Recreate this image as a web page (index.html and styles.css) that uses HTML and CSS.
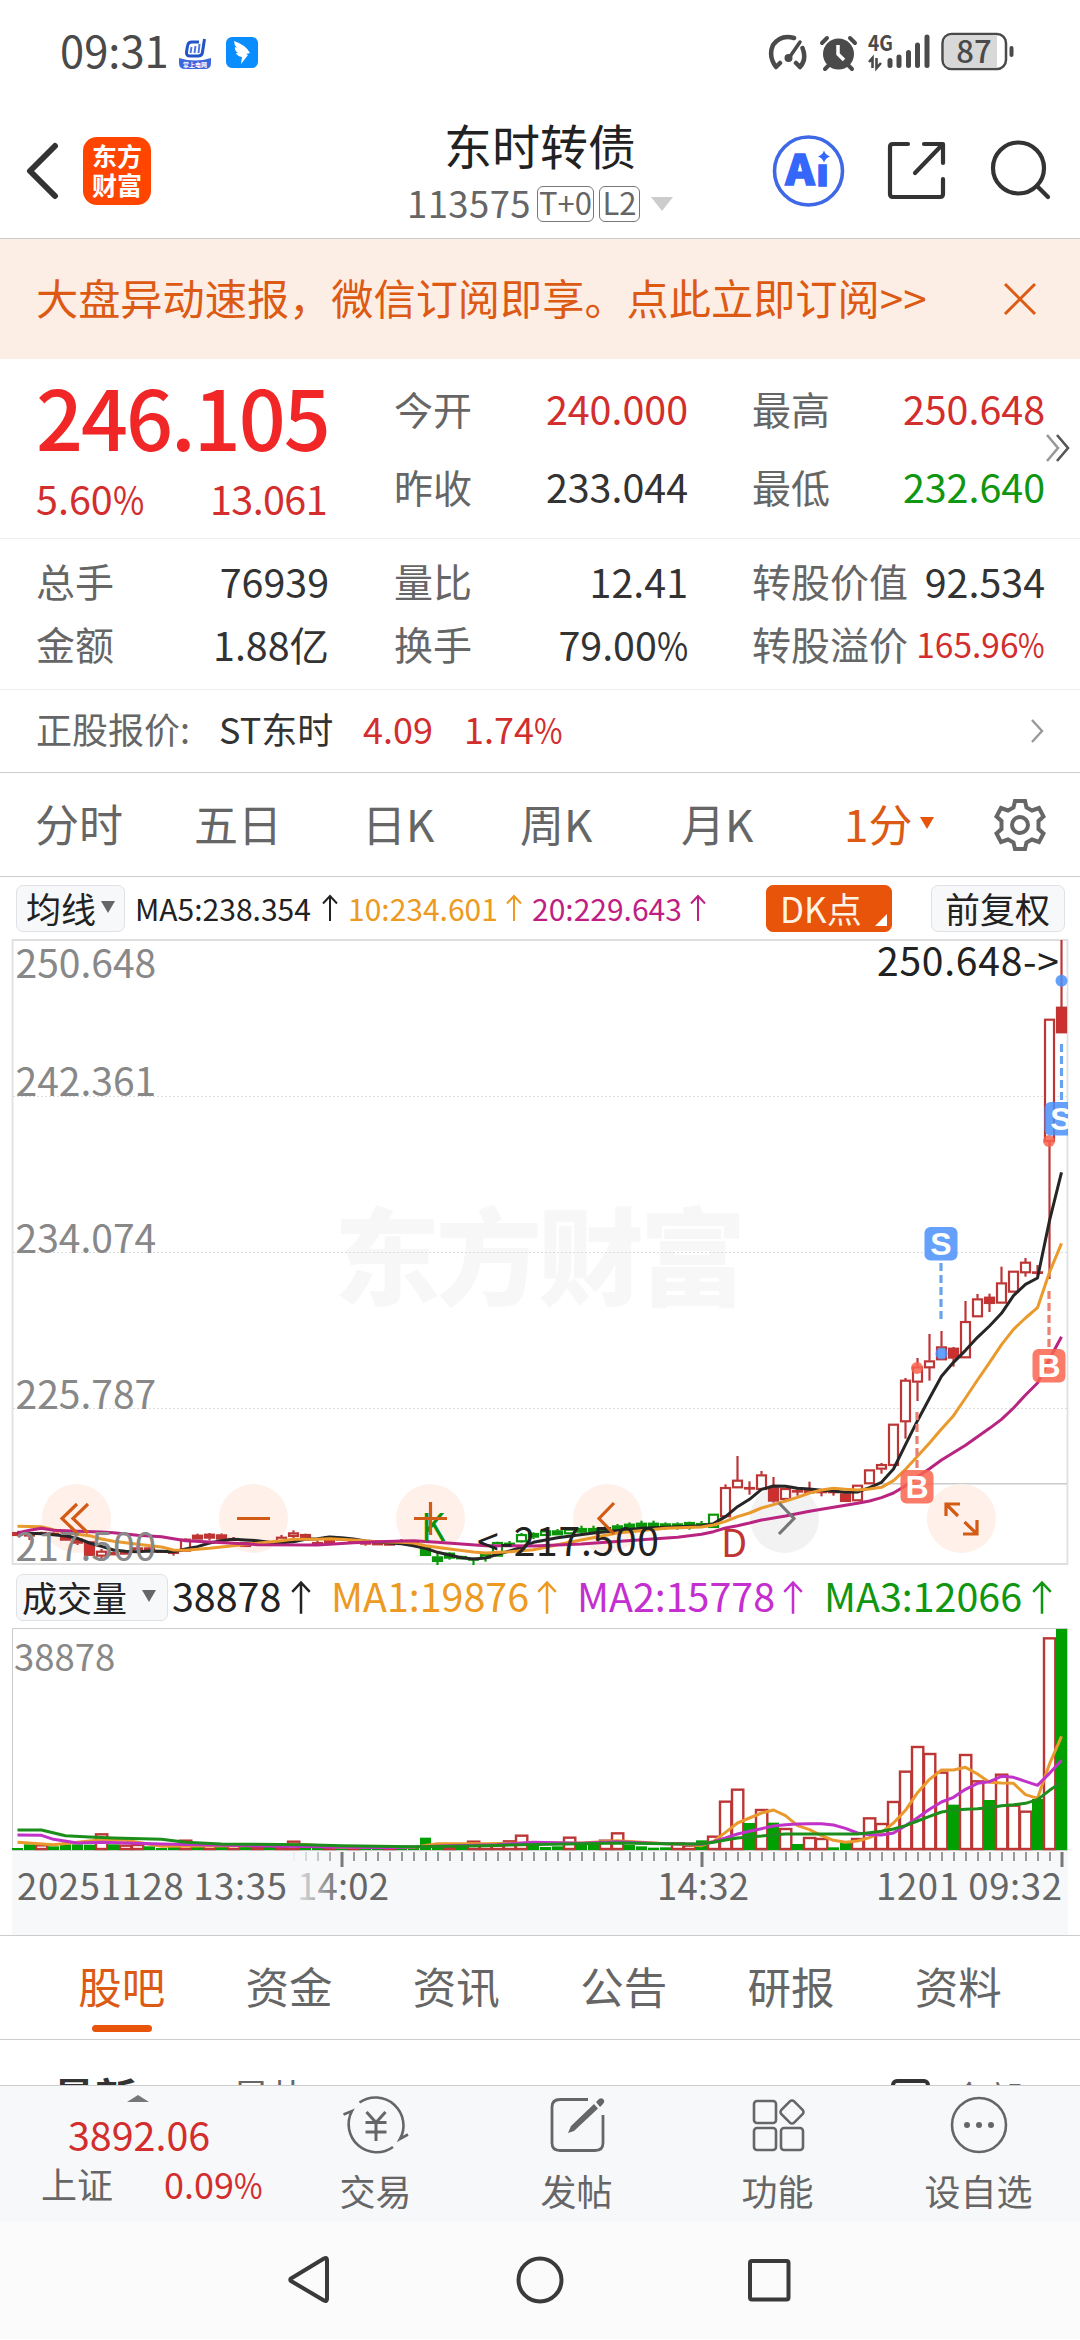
FILE: index.html
```html
<!DOCTYPE html>
<html lang="zh-CN">
<head>
<meta charset="utf-8">
<title>东时转债 113575</title>
<link rel="stylesheet" href="styles.css">
</head>
<body>
<div class="screen">
  <div class="status">
    <span class="clock">09:31</span>
    <svg class="note-a" width="32" height="31" viewBox="0 0 32 31"><path d="M0 20Q16 25 32 20V25Q32 31 26 31H6Q0 31 0 25Z" fill="#3b68dc"/><path d="M20 4H13Q9 4 8.500 8L7.500 14Q7 18 11 18H19Q23 18 23.500 14L25.500 1" fill="none" stroke="#2353c8" stroke-width="3"/><path d="M12.500 9L11.500 15M16.500 8L15.500 15M20.500 6L19.500 15" stroke="#4d78dd" stroke-width="2"/><text x="16" y="29" font-size="6" font-weight="700" text-anchor="middle" fill="#fff">掌上电网</text></svg>
    <svg class="note-b" width="32" height="31" viewBox="0 0 32 31"><rect width="32" height="31" rx="6" fill="#0a8dff"/><path d="M8 4Q20 8 24 16L20 17L22 18L15 27L16 20Q11 19 10 16L12 16Q8 13 9 10L11 11Q8 8 8 4Z" fill="#fff"/></svg>
    <svg class="sys" width="250" height="40" viewBox="0 0 250 40">
      <g fill="none" stroke="#4a4a4a" stroke-width="4.500" stroke-linecap="round">
        <path d="M9 35Q1 24 6 13Q14 2 27 6M35.500 16Q40 27 33 35M9 35L13 31M33 35L29 31"/>
        <path d="M22 26L33 10" stroke-width="3.500"/>
      </g>
      <circle cx="21.500" cy="26" r="4" fill="#4a4a4a"/>
      <circle cx="71.500" cy="22" r="15.500" fill="#4a4a4a"/>
      <path d="M71 13V22L77 28" fill="none" stroke="#fff" stroke-width="3.500"/>
      <path d="M55 11L60 6M88 11L83 6M58 37L62 33M85 37L81 33" stroke="#4a4a4a" stroke-width="4" stroke-linecap="round"/>
      <text x="101" y="19" font-size="21.500" font-weight="700" fill="#4a4a4a" textLength="25" lengthAdjust="spacingAndGlyphs">4G</text>
      <path d="M102 30L105.500 26V36M109.500 26V36L114 31" fill="none" stroke="#4a4a4a" stroke-width="2.600"/>
      <path d="M123 28.500V33.500M132 25V33.500M141.500 20.500V33.500M150.500 13V33.500M160 5V33.500" stroke="#4a4a4a" stroke-width="5" stroke-linecap="round"/>
      <rect x="175.500" y="2" width="63.500" height="35" rx="9" fill="#fff" stroke="#4a4a4a" stroke-width="2.500"/>
      <path d="M184 3.500H230V35.500H184Q177 35.500 177 28V11Q177 3.500 184 3.500Z" fill="#d8d8d8"/>
      <rect x="242.500" y="14" width="4" height="11" rx="2" fill="#4a4a4a"/>
      <text x="207" y="31" font-size="31" fill="#4a4a4a" text-anchor="middle" font-weight="500">87</text>
    </svg>
  </div>

  <header class="header">
    <svg class="back" width="34" height="58" viewBox="0 0 34 58"><path d="M30 4L5 29L30 54" fill="none" stroke="#333" stroke-width="6" stroke-linecap="round" stroke-linejoin="round"/></svg>
    <div class="brand">东方<br>财富</div>
    <div class="heading">
      <h1>东时转债</h1>
      <div class="code"><span class="num">113575</span><span class="tag tag-t">T+0</span><span class="tag tag-l">L2</span><i class="caret"></i></div>
    </div>
    <svg class="tools" width="290" height="76" viewBox="0 0 290 76">
      <circle cx="38.500" cy="38" r="34" fill="#fff" stroke="#3f68e6" stroke-width="3.600"/>
      <text x="15.500" y="52" font-size="42" class="ai" textLength="29" lengthAdjust="spacingAndGlyphs">A</text>
      <text x="46.500" y="53" font-size="37" class="ai" textLength="12" lengthAdjust="spacingAndGlyphs">ı</text>
      <path d="M54 17.500Q55.500 22 60 23.500Q55.500 25 54 29.500Q52.500 25 48 23.500Q52.500 22 54 17.500Z" fill="#3567fb"/>
      <g fill="none" stroke="#333" stroke-width="4.200" stroke-linecap="round" stroke-linejoin="round">
        <path d="M138 11H123Q120 11 120 14V61Q120 64 123 64H170Q173 64 173 61V46M154 11H173V30M172 12L145 40"/>
        <circle cx="248.500" cy="35" r="25.500"/><path d="M267 53L278 64"/>
      </g>
    </svg>
  </header>

  <div class="banner"><span>大盘异动速报，微信订阅即享。点此立即订阅&gt;&gt;</span>
    <svg width="34" height="34" viewBox="0 0 34 34"><path d="M2 2L32 32M32 2L2 32" stroke="#dc5a14" stroke-width="3"/></svg>
  </div>

  <section class="quote">
    <div class="last"><b>246.105</b><div class="chg"><span>5.60<i class="pct">%</i></span><span>13.061</span></div></div>
    <div class="pairs">
      <span>今开</span><em class="red">240.000</em><span class="c3">最高</span><em class="red">250.648</em>
      <span>昨收</span><em>233.044</em><span class="c3">最低</span><em class="green">232.640</em>
    </div>
    <svg class="more" width="26" height="30" viewBox="0 0 26 30"><g fill="none" stroke-width="2.600"><path d="M2 2L13 15L2 28" stroke="#999"/><path d="M12 2L23 15L12 28" stroke="#555"/></g></svg>
  </section>

  <section class="stats">
    <span>总手</span><em>76939</em><span class="c2">量比</span><em>12.41</em><span class="c3">转股价值</span><em>92.534</em>
    <span>金额</span><em>1.88亿</em><span class="c2">换手</span><em>79.00<i class="pct">%</i></em><span class="c3">转股溢价</span><em class="red small">165.96<i class="pct">%</i></em>
  </section>

  <section class="under">
    <span class="lbl">正股报价:</span><span class="name">ST东时</span><span class="red v1">4.09</span><span class="red">1.74<i class="pct">%</i></span>
    <svg width="14" height="26" viewBox="0 0 14 26"><path d="M2 2L12 13L2 24" fill="none" stroke="#999" stroke-width="2.400"/></svg>
  </section>

  <nav class="periods">
    <span>分时</span><span>五日</span><span>日K</span><span>周K</span><span>月K</span><span class="on">1分<i class="caret"></i></span>
    <svg width="54" height="54" viewBox="-27 -27 54 54"><g fill="none" stroke="#666" stroke-width="4" stroke-linejoin="miter"><path d="M-5 -24H5L6.500 -17.500L12 -14.500L19 -17L23.500 -8.500L18.500 -4V4L23.500 8.500L19 17L12 14.500L6.500 17.500L5 24H-5L-6.500 17.500L-12 14.500L-19 17L-23.500 8.500L-18.500 4V-4L-23.500 -8.500L-19 -17L-12 -14.500L-6.500 -17.500Z"/><circle r="8"/></g></svg>
  </nav>

  <div class="legend legend-price">
    <span class="chip">均线<i class="caret"></i></span>
    <span class="ma">MA5:238.354</span><svg class="arr"><use href="#up"/></svg>
    <span class="ma orange">10:234.601</span><svg class="arr orange"><use href="#up"/></svg>
    <span class="ma magenta">20:229.643</span><svg class="arr magenta"><use href="#up"/></svg>
    <span class="chip dk">DK点</span>
    <span class="chip fq">前复权</span>
  </div>

  <svg class="price" id="price" width="1080" height="627" viewBox="0 940 1080 627">
    <defs>
      <symbol id="up" viewBox="0 0 16 28"><path d="M8 27V2M1 9.500L8 2L15 9.500" fill="none" stroke="currentColor" stroke-width="2"/></symbol>
      <clipPath id="plot"><rect x="12" y="940" width="1056" height="626"/></clipPath>
    </defs>
    <text class="mark" x="334" y="1298" textLength="412">东方财富</text>
    <path class="grid" d="M13 1097.500H1067M13 1253.500H1067M13 1409.500H1067"/>
    <path class="frame" d="M12.500 941H1067.500V1565H12.500Z"/>
    <path d="M881 1484.700H1067" stroke="#ccc" stroke-width="1.500"/>
    <g fill="#fff0e9"><circle cx="76.500" cy="1519.500" r="34.500"/><circle cx="253.500" cy="1519.500" r="34.500"/><circle cx="430.500" cy="1519.500" r="34.500"/><circle cx="607.500" cy="1519.500" r="34.500"/><circle cx="784.500" cy="1519.500" r="34.500" fill="#f2f2f2"/><circle cx="961.500" cy="1519.500" r="34.500"/></g>
    <g id="candles" clip-path="url(#plot)"></g>
    <g id="averages"></g>
    <g class="ylab"><text x="15.500" y="979">250.648</text><text x="15.500" y="1097">242.361</text><text x="15.500" y="1254">234.074</text><text x="15.500" y="1409.500">225.787</text><text x="15.500" y="1562">217.500</text></g>
    <text class="peak" x="877" y="977" textLength="182">250.648-&gt;</text>
    <text class="peak" x="477" y="1557" textLength="182">&lt;-217.500</text>
    <text class="kd" x="421" y="1541.500" fill="#0a930a">K</text>
    <text class="kd" x="721" y="1557.500" fill="#c03434">D</text>
    <g fill="none" stroke="#d25c16" stroke-width="3.200">
      <path d="M77 1505L62 1519.500L77 1534M88 1505L73 1519.500L88 1534M237 1519.500H270M414 1519.500H447M430.500 1503V1536M614 1504L599 1519.500L614 1535"/>
      <path d="M946 1517V1505H960M947 1506L958 1517M964.500 1523L977 1535M963 1535H977V1521" />
      <path d="M779 1504L794 1519.500L779 1535" stroke="#777"/>
    </g>
    <g class="tips" clip-path="url(#plot)">
      <path d="M941 1264V1320M1061.500 1045V1101" class="sl"/><path d="M917 1413V1469M1049 1292V1348" class="bl"/>
      <circle cx="1061.500" cy="981.700" r="6" class="s"/><circle cx="941.500" cy="1354.500" r="6" class="s"/>
      <circle cx="917" cy="1369" r="6" class="b"/><circle cx="1049" cy="1142" r="6" class="b"/>
      <rect x="924.500" y="1228" width="33" height="33.500" rx="6" class="s"/><text x="941" y="1256">S</text>
      <rect x="1044.500" y="1103" width="33" height="33.500" rx="6" class="s"/><text x="1061" y="1131">S</text>
      <rect x="900.500" y="1471" width="33" height="33.500" rx="6" class="b"/><text x="917" y="1499">B</text>
      <rect x="1032.500" y="1350" width="33" height="33.500" rx="6" class="b"/><text x="1049" y="1378">B</text>
    </g>
  </svg>

  <div class="legend legend-vol">
    <span class="chip">成交量<i class="caret"></i></span>
    <span class="ma">38878</span><svg class="arr"><use href="#up"/></svg>
    <span class="ma orange">MA1:19876</span><svg class="arr orange"><use href="#up"/></svg>
    <span class="ma violet">MA2:15778</span><svg class="arr violet"><use href="#up"/></svg>
    <span class="ma green">MA3:12066</span><svg class="arr green"><use href="#up"/></svg>
  </div>

  <svg class="volume" id="volume" width="1080" height="307" viewBox="0 1629 1080 307">
    <defs><linearGradient id="fade"><stop offset="0" stop-color="#f7f8fa"/><stop offset="1" stop-color="#f7f8fa" stop-opacity="0"/></linearGradient></defs>
    <rect x="12" y="1852" width="1056" height="84" fill="#f7f8fa"/>
    <path d="M12.500 1629.500H1067.500V1851.500H12.500Z" fill="none" stroke="#ccc"/>
    <text x="14" y="1672" class="vmax">38878</text>
    <g id="bars"></g>
    <g id="vaverages"></g>
    <g id="ticks"></g>
    <g class="xlab"><text x="17" y="1901" textLength="270">20251128 13:35</text><text x="297" y="1901" textLength="92">14:02</text><text x="657" y="1901" textLength="92">14:32</text><text x="876" y="1901" textLength="186">1201 09:32</text></g>
    <rect x="289" y="1853" width="54" height="82" fill="url(#fade)"/>
  </svg>

  <nav class="sections">
    <span class="on">股吧</span><span>资金</span><span>资讯</span><span>公告</span><span>研报</span><span>资料</span>
  </nav>

  <div class="feed"><b>最新</b><span class="hot">最热</span><i class="box"></i><span class="all">全部</span></div>

  <footer class="bar">
    <div class="index"><i class="tri"></i><div class="pt">3892.06</div><div class="row"><span>上证</span><span class="red">0.09<i class="pct">%</i></span></div></div>
    <div class="item"><svg width="68" height="60" viewBox="-34 -30 68 60"><g fill="none" stroke="#666" stroke-width="2.600"><path d="M-16.500 -22.500A28 28 0 0 1 24 14L32 9.500M17 22A28 28 0 0 1 -24 -14L-32.500 -10.500"/><path d="M-9.500 -13L0 -2.500L9.500 -13M0 -2.500V16M-10.500 -2.500H10.500M-10.500 7H10.500" stroke-width="3"/></g></svg><span>交易</span></div>
    <div class="item"><svg width="60" height="60" viewBox="-30 -30 60 60"><path d="M11 -25.500H-17Q-25 -25.500 -25 -18V18Q-25 25.500 -17 25.500H18Q26 25.500 26 18V-10" fill="none" stroke="#666" stroke-width="2.800"/><path d="M-9 8L-6 1L17 -21L21 -16.500L-3 6ZM19 -23L22 -26Q25 -28 27 -25Q28 -23 26 -21L23 -18Z" fill="#666"/></svg><span>发帖</span></div>
    <div class="item"><svg width="60" height="60" viewBox="-30 -30 60 60"><g fill="none" stroke="#666" stroke-width="2.600"><rect x="-24" y="-24" width="22" height="22" rx="3"/><rect x="-24" y="3" width="22" height="22" rx="3"/><rect x="3" y="3" width="22" height="22" rx="3"/><rect x="5" y="-22" width="18" height="18" rx="3" transform="rotate(45 14 -13)"/></g></svg><span>功能</span></div>
    <div class="item"><svg width="60" height="60" viewBox="-30 -30 60 60"><circle r="27" fill="none" stroke="#666" stroke-width="2.600"/><g fill="#666"><circle cx="-12" r="3"/><circle r="3"/><circle cx="12" r="3"/></g></svg><span>设自选</span></div>
  </footer>

  <div class="keys">
    <svg width="504" height="50" viewBox="288 2256 504 50"><g fill="none" stroke="#3a3a3a" stroke-width="4" stroke-linejoin="round"><path d="M291 2279.500L324 2259.500Q327 2258 327 2261V2300Q327 2303 324 2301.500L291 2282Q289.500 2280.500 291 2279.500Z"/><circle cx="540" cy="2281" r="21.500"/><rect x="750" y="2262" width="38.500" height="38.500" rx="2"/></g></svg>
  </div>
</div>
<script src="chart.js"></script>
</body>
</html>
```

FILE: styles.css
```css
* { box-sizing: border-box; }
body { margin: 0; background: #fff; }
.screen {
  width: 1080px; height: 2340px; overflow: hidden;
  display: flex; flex-direction: column;
  font-family: "Noto Sans CJK SC", "Noto Sans", sans-serif;
  color: #333; background: #fff;
}
.screen > * { flex: none; }
svg { display: block; flex: none; }
svg text { font-family: "Noto Sans CJK SC", "Noto Sans", sans-serif; }
em, i { font-style: normal; }
.red { color: #d22e2e; }
.green { color: #109610; }
.caret { display: block; border: solid transparent; border-width: 12px 7px 0; border-top-color: #666; }
.pct { display: inline-block; transform: scaleX(.86); transform-origin: left; margin-right: -.13em; }

.status { height: 105px; display: flex; align-items: flex-start; padding-left: 60px; }
.clock { width: 119px; font-size: 43.500px; line-height: 100px; color: #4a4a4a; white-space: nowrap; }
.note-a { margin-top: 38px; }
.note-b { margin: 37px 0 0 15px; }
.sys { margin: 32px 0 0 509px; }

.header { height: 134px; display: flex; align-items: flex-start; border-bottom: 1px solid #ccc; padding-left: 25px; }
.back { margin-top: 37px; }
.brand { width: 68px; height: 68px; margin: 32px 0 0 24px; border-radius: 14px; background: #ff4500; color: #fff; font-size: 25px; line-height: 29px; font-weight: 700; text-align: center; padding-top: 4px; }
.heading { width: 390px; margin-left: 194px; text-align: center; }
.heading h1 { margin: 7px 0 0; font-size: 48px; line-height: 64px; font-weight: 400; color: #222; }
.code { display: flex; justify-content: center; align-items: center; height: 36px; margin: 10px 0 0; color: #666; }
.num { font-size: 36.500px; letter-spacing: .4px; line-height: 32px; margin-right: 6px; padding-bottom: 3px; }
.tag { height: 36px; border: 1.500px solid #777; border-radius: 6px; font-size: 31px; line-height: 30px; text-align: center; }
.tag-t { width: 57px; }
.tag-l { width: 41px; margin-left: 5px; }
.code .caret { border-width: 14px 11px 0; border-top-color: #ccc; margin-left: 11px; }
.tools { margin: 28px 0 0 35px; }
.ai { font-weight: 900; fill: #3567fb; stroke: #3567fb; stroke-width: 1.500px; }

.banner { height: 120px; padding: 0 43px 0 36px; display: flex; align-items: center; justify-content: space-between; background: #fdeee5; color: #dc5a14; font-size: 42.200px; }
.banner span { padding-bottom: 6px; }

.quote { position: relative; height: 180px; display: flex; border-bottom: 1px solid #eee; padding: 0 36px 0 36px; }
.last { width: 291px; color: #d22e2e; }
.last b { display: block; margin-top: 6px; font-size: 82.500px; line-height: 100px; font-weight: 500; letter-spacing: -2px; color: #f12626; }
.chg { display: flex; justify-content: space-between; font-size: 39.500px; line-height: 64px; margin-top: 1px; }
.chg span:last-child { letter-spacing: -.6px; }
.pairs { width: 651px; margin-left: 67px; padding-top: 10px; display: grid; grid-template-columns: 90px 204px 154px 203px; grid-auto-rows: 78px; line-height: 78px; font-size: 39px; color: #666; }
.c3 { padding-left: 64px; white-space: nowrap; }
.quote em, .stats em { text-align: right; }
.pairs em, .stats em { color: #333; font-size: 39.400px; }
.quote .red, .stats .red { color: #d22e2e; }
.quote .green { color: #109610; }
.more { position: absolute; right: 9px; top: 74px; }

.stats { height: 151px; padding: 10px 36px 0; display: grid; grid-template-columns: 90px 203px 155px 204px 220px 137px; grid-auto-rows: 63px; line-height: 63px; font-size: 39px; color: #666; border-bottom: 1px solid #eee; white-space: nowrap; }
.c2 { padding-left: 65px; }
.stats .small { font-size: 33.500px; }

.under { height: 83px; padding: 0 36px; display: flex; align-items: center; font-size: 36px; line-height: 74px; border-bottom: 1px solid #ccc; }
.under > span { padding-bottom: 7px; }
.under .lbl { width: 183px; color: #666; }
.under .name { width: 144px; }
.under .v1 { width: 101px; }
.under svg { margin-left: auto; }

.periods { height: 104px; padding-left: 35px; display: grid; grid-template-columns: 159px 168px 158px 161px 163px 149px 60px; align-items: center; font-size: 44px; line-height: 96px; color: #666; border-bottom: 1px solid #ccc; }
.periods > span { padding-bottom: 3px; }
.periods .on { color: #dc5a14; display: flex; align-items: center; }
.periods .on .caret { border-top-color: #e8540a; margin-left: 8px; }

.legend { display: flex; align-items: center; color: #222; white-space: nowrap; }
.chip { height: 47px; border: 1.500px solid #e1e2e6; border-radius: 7px; background: #f7f8fa; font-size: 35px; line-height: 41px; color: #222; padding: 0 9px 2px; display: flex; align-items: center; }
.legend .green { color: #109610; }
.legend .orange { color: #ec9a22; }
.legend .magenta { color: #bf1f83; }
.legend .violet { color: #c42fd0; }
.legend-price { height: 62px; padding-left: 16px; font-size: 30px; }
.legend-price .chip:first-child { width: 109px; }
.legend-price .caret { margin-left: 5px; }
.legend-price .ma { width: 187px; margin-left: 10px; }
.legend-price .ma.orange, .legend-price .ma.magenta { width: 158px; margin-left: 10px; }
.legend-price .arr { width: 16px; height: 28px; }
.legend-price .dk { position: relative; width: 126px; margin-left: 60px; background: #e8540a; border-color: #e8540a; color: #fff3e6; padding-left: 13px; }
.dk::after { content: ""; position: absolute; right: 4px; bottom: 5px; border: solid transparent; border-width: 0 0 12px 12px; border-bottom-color: #fff; }
.legend-price .fq { width: 134px; margin-left: 39px; padding-left: 13px; }

.grid { stroke: #ddd; stroke-dasharray: 2 2; }
.frame { fill: none; stroke: #e0e0e0; stroke-width: 1.800px; }
.mark { font-size: 106px; font-weight: 900; fill: #f7f7f7; }
.ylab text { font-size: 39px; fill: #888; }
.peak { font-size: 39px; fill: #222; }
.kd { font-size: 38px; }
.up { fill: #fff; stroke: #bd3636; }
.up-solid { fill: #cf2e2e; stroke: #bd3636; }
.dn { fill: #fff; stroke: #0c960c; }
.dn-solid { fill: #0c960c; stroke: #0c960c; }
.line { fill: none; stroke-width: 3px; stroke-linejoin: round; }
.tips { fill-opacity: .85; }
.tips .s { fill: #4a90fa; }
.tips .b { fill: #f8644e; }
.sl, .bl { fill: none; stroke-width: 3.200px; stroke-dasharray: 8 4; }
.sl { stroke: #6aa2ee; }
.bl { stroke: #ea8072; }
.tips text { font: 700 32px "Liberation Sans", sans-serif; fill: #fff; fill-opacity: 1; text-anchor: middle; }

.legend-vol { height: 62px; padding-left: 16px; font-size: 39.400px; }
.legend-vol .chip { width: 152px; padding-left: 5px; }
.legend-vol .caret { margin-left: 15px; }
.legend-vol .ma { width: 206px; margin-left: 20px; padding-bottom: 5px; flex: none; }
.legend-vol .chip + .ma { width: 119px; margin-left: 4px; }
.legend-vol .arr { width: 20px; height: 35px; }
.legend-vol .ma.violet { width: 206px; margin-left: 20px; }
.legend-vol .ma.green { width: 208px; margin-left: 21px; }
.vmax { font-size: 36.500px; fill: #888; }
.xlab text { font-size: 36.500px; fill: #666; }

.sections { height: 105px; margin-top: 0; padding: 0 38px; display: flex; border: solid #ccc; border-width: 1px 0; font-size: 43.500px; line-height: 100px; color: #666; text-align: center; }
.sections span { flex: 1; }
.sections .on { position: relative; color: #dc5a14; }
.sections .on::after { content: ""; position: absolute; left: 54px; bottom: 7px; width: 60px; height: 7px; border-radius: 4px; background: #e8540a; }

.feed { height: 45px; overflow: hidden; display: flex; align-items: flex-start; padding: 34px 0 0 53px; font-size: 38px; line-height: 44px; color: #666; }
.feed b { font-size: 42px; color: #333; width: 179px; }
.hot { width: 659px; }
.box { width: 39px; height: 39px; margin-top: 5px; border: 4px solid #333; border-radius: 6px; }
.all { font-size: 36px; margin: 1px 0 0 21px; }

.bar { height: 136px; border-top: 1px solid #ccc; background: #f7f8fa; display: flex; color: #666; }
.index { width: 275px; }
.tri { display: block; width: 0; margin: 9px 0 0 127px; border: solid transparent; border-width: 0 11px 7px; border-bottom-color: #777; }
.pt { margin: 4px 0 0 68px; font-size: 39.400px; line-height: 56px; color: #d22e2e; }
.index .row { display: flex; font-size: 36px; line-height: 40px; margin: 1px 0 0 41px; }
.index .row .red { margin-left: 51px; }
.item { width: 201px; display: flex; flex-direction: column; align-items: center; padding-top: 9px; font-size: 36px; line-height: 48px; }
.item span { margin-top: 11px; }
.keys { height: 118px; background: #fbfbfb; padding: 34px 0 0 288px; }
```

FILE: chart.js
```js
const NS = 'http://www.w3.org/2000/svg';
const x = i => 17.5 + 12 * i;

function add(parent, tag, attrs) {
  const el = document.createElementNS(NS, tag);
  for (const k in attrs) el.setAttribute(k, attrs[k]);
  document.getElementById(parent).appendChild(el);
}

// kind (r/g hollow, R/G solid), high, body top, body bottom, low
const candles = `R1120 1120 1130 1130|R1124 1126 1130 1143|R1118 1120 1124 1126|R1120 1122 1128 1128|R1125 1125 1144 1144|R1140 1140 1153 1158|R1148 1148 1190 1190|r1170 1176 1192 1198|R1178 1180 1188 1188|R1176 1178 1186 1186|R1160 1166 1170 1172|R1164 1166 1178 1178|R1174 1175 1180 1182|R1175 1178 1181 1190|r1138 1140 1177 1178|R1124 1128 1141 1141|R1122 1125 1138 1144|R1123 1127 1141 1146|R1134 1138 1144 1144|R1150 1150 1163 1163|R1148 1148 1156 1156|R1148 1148 1154 1154|r1128 1134 1150 1150|r1114 1121 1133 1138|R1124 1126 1138 1138|R1145 1150 1156 1160|R1132 1132 1152 1157|R1136 1138 1144 1146|R1144 1144 1150 1150|R1145 1150 1156 1160|R1150 1151 1158 1158|R1152 1152 1159 1159|R1140 1144 1154 1154|R1146 1148 1156 1156|G1160 1160 1190 1190|G1182 1193 1208 1218|G1180 1182 1198 1202|G1190 1192 1200 1200|G1196 1198 1204 1218|g1184 1186 1198 1208|g1148 1150 1192 1192|G1146 1152 1158 1160|g1122 1126 1149 1150|G1120 1123 1135 1140|g1110 1115 1130 1130|G1110 1115 1128 1128|g1105 1110 1125 1125|G1100 1108 1120 1125|G1100 1108 1118 1120|G1100 1106 1118 1120|G1095 1100 1112 1115|G1090 1095 1108 1112|G1085 1092 1105 1110|G1085 1092 1108 1112|G1090 1094 1106 1112|G1090 1094 1106 1112|G1088 1090 1106 1112|G1086 1093 1104 1106|g1065 1065 1106 1106|r976 985 1074 1074|r891 963 987 987|R967 985 987 1007|r936 947 992 992|R954 986 1027 1031|r988 988 1022 1022|R988 994 997 1010|R968 990 1002 1002|R990 996 999 1012|R990 996 999 1010|R1004 1004 1028 1028|r978 978 1026 1026|r932 932 975 975|r912 916 931 944|r795 795 920 920|r657 663 789 839|r597 623 670 726|r525 605 627 665|r516 563 603 603|R564 567 598 623|r426 487 597 597|r405 419 474 474|R404 414 434 459|r323 371 433 433|r336 336 400 400|r297 309 342 353|R318 338 340 350|r-420 -420 -52 360|R-657 -456 -378 -378`;
const py = v => 1160 + v / 3;
candles.split('|').forEach((row, i) => {
  const kind = row[0];
  const [hi, top, bot, lo] = row.slice(1).split(' ').map(Number);
  const cls = { r: 'up', R: 'up-solid', g: 'dn', G: 'dn-solid' }[kind];
  if (hi < top) add('candles', 'path', { class: cls, 'stroke-width': 2.2, d: `M${x(i)} ${py(hi)}V${py(top)}` });
  if (lo > bot) add('candles', 'path', { class: cls, 'stroke-width': 2.2, d: `M${x(i)} ${py(bot)}V${py(lo)}` });
  add('candles', 'rect', { class: cls, 'stroke-width': 2.2, x: x(i) - 4.5, width: 9, y: py(top) + .7, height: Math.max(0.5, py(bot) - py(top) - 1.4) });
});

// "index:value" pairs joined into a line
function line(parent, data, y, color) {
  const pts = data.split(' ').map(p => { const [i, v] = p.split(':').map(Number); return x(i) + ',' + y(v); });
  add(parent, 'polyline', { class: 'line', stroke: color, points: pts.join(' ') });
}
line('averages', '0:1120 1:1123 2:1124 3:1127 4:1131 5:1138 6:1152 7:1162 8:1173 9:1177 10:1178 11:1176 12:1177 13:1178 14:1170 15:1163 16:1152 17:1145 18:1141 19:1143 20:1145 21:1150 22:1151 23:1148 24:1141 25:1139 26:1134 27:1136 28:1140 29:1146 30:1149 31:1152 32:1154 33:1160 34:1168 35:1180 36:1188 37:1196 38:1200 39:1197 40:1186 41:1176 42:1165 43:1150 45:1136 48:1122 52:1108 55:1103 57:1100 58:1094 59:1073 60:1043 61:1021 62:991 63:981 64:982 65:988 66:990 67:994 68:996 69:1000 70:999 71:986 72:970 73:930 74:857 75:785 76:718 77:652 78:610 79:574 80:535 81:501 82:463 83:410 84:376 85:357 86:185 87:40', py, '#262626');
line('averages', '0:1102 2:1103 3:1112 4:1120 5:1126 6:1130 7:1140 8:1147 10:1156 12:1164 13:1173 14:1174 16:1168 18:1160 20:1153 22:1145 23:1141 25:1141 26:1139 28:1143 30:1148 32:1150 33:1152 34:1160 36:1170 38:1179 39:1182 41:1178 43:1172 46:1150 50:1122 54:1108 57:1104 58:1098 59:1087 60:1073 61:1062 62:1047 63:1037 64:1026 65:1015 66:1002 67:993 68:988 69:991 70:993 71:990 72:985 73:965 74:931 75:892 76:852 77:810 78:770 79:717 80:663 81:611 82:557 83:511 84:477 85:446 86:340 87:253', py, '#ea9a2c');
line('averages', '0:1122 1:1114 2:1108 3:1114 5:1117 7:1119 8:1121 10:1129 12:1133 14:1145 18:1153 20:1157 25:1158 28:1151 30:1148 33:1145 35:1150 39:1160 43:1161 47:1155 52:1142 55:1135 57:1126 58:1118 59:1107 60:1100 61:1092 62:1083 64:1071 66:1057 68:1045 70:1033 71:1026 72:1016 73:1002 74:980 75:953 76:929 77:903 79:859 81:808 82:781 83:747 84:708 85:672 86:600 87:533', py, '#b82480');

const bars = 'G687 G676 R679 G682 G676 G676 G677 R646 G676 R680 R678 G682 G687 G682 R665 G682 R680 G683 R680 G684 R683 G684 R683 R668 G683 G684 R682 G686 R686 G686 G686 R686 G686 G684 G656 G676 R684 G684 R668 R680 R680 R667 R650 G675 G684 G682 R656 G676 G675 R665 R643 G678 G682 G686 G685 R673 R680 G664 R653 R548 R512 G612 R573 G611 R630 G675 R657 R660 G685 G670 R660 R598 R615 R549 R458 R384 R405 R461 G557 R408 R487 G543 R467 R560 R578 G540 R58 G30'.split(' ');
const vy = v => 1620 + v / 3;
bars.forEach((b, i) => {
  const top = vy(+b.slice(1));
  if (b[0] === 'R') add('bars', 'rect', { class: 'up', 'stroke-width': 2.4, x: x(i) - 5.5, width: 11.3, y: top, height: Math.max(1, 1850 - top) });
  else add('bars', 'rect', { fill: '#00a000', x: x(i) - 5.5, width: 11, y: top, height: 1851 - top });
});
line('vaverages', '0:670 3:677 7:662 9:664 12:682 19:680 24:677 27:685 33:685 35:674 39:674 43:672 47:672 50:665 53:672 56:677 57:680 58:667 59:640 60:612 61:597 62:582 63:573 64:590 65:620 66:632 67:650 68:664 69:670 70:666 71:656 72:640 73:612 74:574 75:521 76:481 77:453 78:453 79:445 80:465 81:490 82:492 83:493 84:527 85:538 86:435 87:352', vy, '#ea9a2c');
line('vaverages', '0:648 2:649 3:661 5:672 7:670 12:675 16:678 22:682 31:686 36:680 40:677 43:670 47:673 50:668 54:674 57:676 58:668 59:657 60:645 61:637 62:629 63:621 64:617 65:615 66:614 67:614 68:618 69:628 70:642 71:647 72:648 73:642 74:620 75:596 76:571 77:549 78:535 79:511 80:493 81:488 82:472 83:475 84:487 85:499 86:463 87:424', vy, '#c132c9');
line('vaverages', '0:633 2:633 4:650 6:654 8:657 12:661 14:670 17:675 24:677 27:680 33:683 39:680 42:677 47:674 50:672 54:674 57:675 58:670 59:663 60:657 61:654 62:651 63:647 64:645 70:645 71:641 72:637 73:630 74:620 75:606 76:592 77:579 78:574 79:571 80:569 81:566 82:560 83:557 84:553 85:542 86:514 87:490', vy, '#1c8e1c');

for (let i = 23; i <= 87; i++) {
  const major = (87 - i) % 30 === 0;
  add('ticks', 'path', { stroke: major ? '#777' : '#999', 'stroke-width': major ? 3 : 2, d: `M${x(i) + .5} 1853V${major ? 1868 : 1862}` });
}
```
